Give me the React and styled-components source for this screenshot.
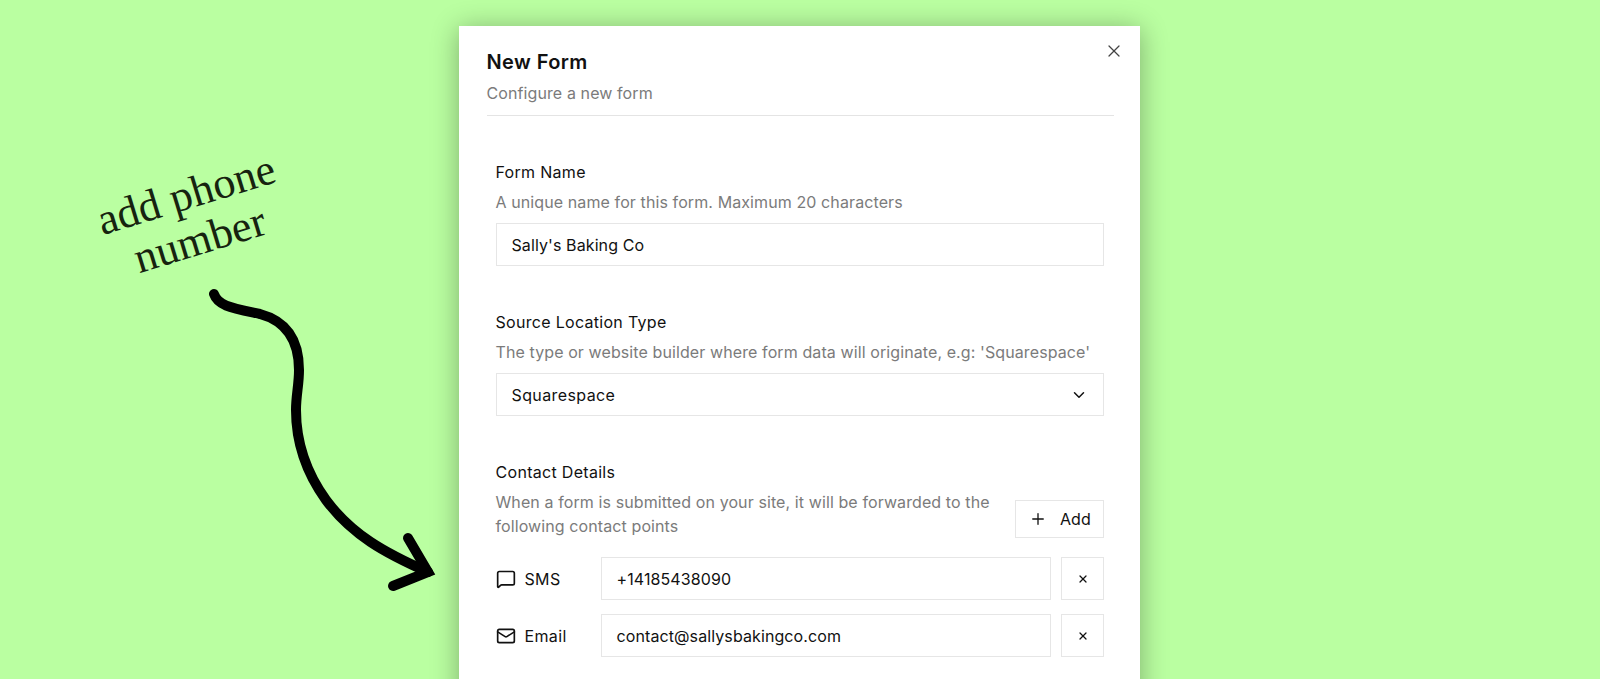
import React from 'react';
import styled, { createGlobalStyle } from 'styled-components';
import { ChevronDown, Mail, MessageSquare, Plus, X } from 'lucide-react';

const GlobalStyle = createGlobalStyle`
  html, body {
    margin: 0;
    height: 100%;
    overflow: hidden;
  }
  body {
    background: #baffa1;
    font-family: Inter, "Liberation Sans", sans-serif;
    color: #111;
    letter-spacing: 0.1px;
  }
  * {
    box-sizing: border-box;
  }
`;

const Page = styled.div`
  position: relative;
  height: 100vh;
  overflow: hidden;
  display: flex;
  justify-content: center;
  align-items: flex-start;
  padding: 26px 2px 0 0;
`;

const Note = styled.div`
  position: absolute;
  left: 91px;
  top: 170px;
  width: 204px;
  font-family: "Liberation Serif", serif;
  font-size: 44px;
  line-height: 47px;
  letter-spacing: 0.2px;
  text-align: center;
  color: #16230f;
  transform: rotate(-17deg);
`;

const Arrow = styled.svg`
  position: absolute;
  left: 0;
  top: 0;
`;

const Modal = styled.div`
  position: relative;
  flex: none;
  width: 681px;
  height: 900px;
  background: #fff;
  padding: 22px 26px 0 28px;
  box-shadow: 0 3px 26px rgba(0, 0, 0, 0.32);
`;

const Close = styled.button`
  position: absolute;
  top: 15px;
  right: 16px;
  width: 20px;
  height: 20px;
  padding: 0;
  border: none;
  background: none;
  color: #444;
  display: flex;
  align-items: center;
  justify-content: center;
`;

const Header = styled.div`
  padding-bottom: 10px;
  border-bottom: 1px solid #e4e4e4;
`;

const Title = styled.h2`
  margin: 0 0 5px;
  font-size: 20px;
  line-height: 28px;
  font-weight: 600;
  letter-spacing: 0.4px;
`;

const Subtitle = styled.p`
  margin: 0;
  font-size: 16px;
  line-height: 24px;
  color: #7b7b7b;
`;

const Form = styled.div`
  padding: 44px 10px 0 9px;
  display: flex;
  flex-direction: column;
  gap: 44px;
`;

const Field = styled.div`
  display: flex;
  flex-direction: column;
`;

const Label = styled.div`
  font-size: 16px;
  line-height: 24px;
  font-weight: 430;
  margin-bottom: 6px;
  letter-spacing: 0.3px;
`;

const Description = styled.p`
  margin: 0 0 9px;
  font-size: 16px;
  line-height: 24px;
  color: #7b7b7b;
`;

const Box = styled.div`
  flex: ${(p) => (p.$grow ? '1' : 'none')};
  height: 43px;
  padding: 0 15px;
  border: 1px solid #e6e6e6;
  background: #fff;
  font-size: 16px;
  letter-spacing: ${(p) => (p.$select ? '0.4px' : '0.1px')};
  display: flex;
  align-items: center;
  justify-content: space-between;
`;

const ContactHead = styled.div`
  display: flex;
  align-items: flex-start;
  justify-content: space-between;
  margin-bottom: 19px;
`;

const ContactText = styled(Description)`
  width: 500px;
  margin: 0;
`;

const AddButton = styled.button`
  flex: none;
  width: 89px;
  height: 38px;
  margin-top: 10px;
  padding: 0 0 0 2px;
  border: 1px solid #e6e6e6;
  background: #fff;
  color: #111;
  font: 400 16px Inter, sans-serif;
  letter-spacing: 0.2px;
  display: flex;
  align-items: center;
  justify-content: center;
  gap: 13px;
`;

const ContactRows = styled.div`
  display: flex;
  flex-direction: column;
  gap: 14px;
`;

const ContactRow = styled.div`
  display: flex;
  align-items: center;
  gap: 10px;
`;

const ContactType = styled.div`
  flex: none;
  width: 95px;
  display: flex;
  align-items: center;
  gap: 9px;
  font-size: 16px;
  letter-spacing: 0.35px;
`;

const RemoveButton = styled.button`
  flex: none;
  width: 43px;
  height: 43px;
  padding: 0 0 0 1px;
  border: 1px solid #e6e6e6;
  background: #fff;
  color: #111;
  display: flex;
  align-items: center;
  justify-content: center;
`;

const contacts = [
  { type: 'SMS', Icon: MessageSquare, value: '+14185438090' },
  { type: 'Email', Icon: Mail, value: 'contact@sallysbakingco.com' },
];

const App = () => (
  <Page>
    <GlobalStyle />
    <Note>add phone number</Note>
    <Arrow width="460" height="679" viewBox="0 0 460 679" fill="none" stroke="#000" strokeWidth="10" strokeLinecap="round">
      <path d="M214 294C218 306 232 308 260 314C286 321 299 340 299 370C299 385 296 395 296 410C296 445 308 475 326 500C352 535 385 553 428 572" />
      <path d="M408 538L428 572L393 586" />
    </Arrow>
    <Modal>
      <Close>
        <X size={20} strokeWidth={1.5} />
      </Close>
      <Header>
        <Title>New Form</Title>
        <Subtitle>Configure a new form</Subtitle>
      </Header>
      <Form>
        <Field>
          <Label>Form Name</Label>
          <Description>A unique name for this form. Maximum 20 characters</Description>
          <Box>Sally's Baking Co</Box>
        </Field>
        <Field>
          <Label>Source Location Type</Label>
          <Description>The type or website builder where form data will originate, e.g: 'Squarespace'</Description>
          <Box $select>
            Squarespace
            <ChevronDown size={18} strokeWidth={2} />
          </Box>
        </Field>
        <Field>
          <Label>Contact Details</Label>
          <ContactHead>
            <ContactText>When a form is submitted on your site, it will be forwarded to the following contact points</ContactText>
            <AddButton>
              <Plus size={18} strokeWidth={1.75} />
              Add
            </AddButton>
          </ContactHead>
          <ContactRows>
            {contacts.map(({ type, Icon, value }) => (
              <ContactRow key={type}>
                <ContactType>
                  <Icon size={20} strokeWidth={2} />
                  {type}
                </ContactType>
                <Box $grow>{value}</Box>
                <RemoveButton>
                  <X size={12} strokeWidth={2.5} />
                </RemoveButton>
              </ContactRow>
            ))}
          </ContactRows>
        </Field>
      </Form>
    </Modal>
  </Page>
);

export default App;
